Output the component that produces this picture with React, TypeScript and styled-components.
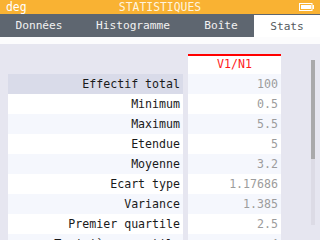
import React from "react";
import styled, { createGlobalStyle } from "styled-components";

const Global = createGlobalStyle`
  html, body { margin: 0; padding: 0; }
  body { width: 320px; height: 240px; overflow: hidden; background: #e6e6f0; }
  * { box-sizing: border-box; }
`;

const Screen = styled.div`
  width: 320px;
  height: 240px;
  display: flex;
  flex-direction: column;
  overflow: hidden;
  font-family: "DejaVu Sans Mono", "Liberation Mono", monospace;
  background: #e6e6f0;
`;

const TitleBar = styled.div`
  flex-shrink: 0;
  height: 14px;
  background: #f9b233;
  color: #ffffff;
  display: flex;
  align-items: center;
  position: relative;
  font-size: 11.4px;
  line-height: 14px;
  padding: 0 6px;
`;

const Mode = styled.span`
  flex: 1;
`;

const Title = styled.span`
  position: absolute;
  left: 0;
  right: 0;
  text-align: center;
  color: #fff4df;
`;

const TabBar = styled.div`
  flex-shrink: 0;
  height: 23px;
  background: #5e6670;
  display: flex;
`;

const Tab = styled.div<{ $w: number; $active?: boolean }>`
  width: ${(p) => p.$w}px;
  margin-top: ${(p) => (p.$active ? 1 : 0)}px;
  background: ${(p) => (p.$active ? "#ffffff" : "transparent")};
  color: ${(p) => (p.$active ? "#555a60" : "#f2f2f2")};
  display: flex;
  align-items: center;
  justify-content: center;
  font-size: 11.2px;
`;

const Strip = styled.div`
  flex-shrink: 0;
  height: 7px;
  background: #fcfcfd;
`;

const Content = styled.div`
  flex: 1;
  min-height: 0;
  display: flex;
  padding: 10px 0 0 8px;
`;

const Table = styled.div`
  width: 273px;
  display: grid;
  grid-template-columns: 175px 93px;
  column-gap: 5px;
  grid-auto-rows: 20px;
  align-content: start;
  font-size: 11.6px;
`;

const Blank = styled.div``;

const HeadCell = styled.div`
  border-top: 2px solid #ff0000;
  background: #ffffff;
  color: #ff1a1a;
  text-align: center;
  line-height: 16px;
`;

const Label = styled.div<{ $bg: string }>`
  background: ${(p) => p.$bg};
  color: #1a1a1a;
  text-align: right;
  padding-right: 3px;
  line-height: 20px;
  white-space: nowrap;
`;

const Value = styled.div<{ $bg: string }>`
  background: ${(p) => p.$bg};
  color: #9c9c9c;
  text-align: right;
  padding-right: 3px;
  line-height: 20px;
  white-space: nowrap;
`;

const Track = styled.div`
  flex-shrink: 0;
  margin-left: 30px;
  margin-top: 6px;
  width: 4px;
  height: 165px;
  background: #dcdbe5;
  display: flex;
  flex-direction: column;
`;

const Thumb = styled.div`
  height: 99px;
  background: #a9a9ab;
`;

const Battery = () => (
  <svg width="15" height="8" viewBox="0 0 15 8">
    <rect x="0.5" y="0.5" width="12.5" height="7" fill="none" stroke="#fff" />
    <rect x="2" y="2" width="10" height="4" fill="#fff" />
    <rect x="13.5" y="2" width="1.5" height="4" fill="#fff" />
  </svg>
);

const rows: [string, string][] = [
  ["Effectif total", "100"],
  ["Minimum", "0.5"],
  ["Maximum", "5.5"],
  ["Etendue", "5"],
  ["Moyenne", "3.2"],
  ["Ecart type", "1.17686"],
  ["Variance", "1.385"],
  ["Premier quartile", "2.5"],
  ["Troisième quartile", "4"],
];

export default function App() {
  return (
    <>
      <Global />
      <Screen>
        <TitleBar>
          <Mode>deg</Mode>
          <Title>STATISTIQUES</Title>
          <Battery />
        </TitleBar>
        <TabBar>
          <Tab $w={78}>Données</Tab>
          <Tab $w={110}>Histogramme</Tab>
          <Tab $w={66}>Boîte</Tab>
          <Tab $w={66} $active>Stats</Tab>
        </TabBar>
        <Strip />
        <Content>
          <Table>
            <Blank />
            <HeadCell>V1/N1</HeadCell>
            {rows.map(([l, v], i) => {
              const bg = i % 2 === 0 ? "#f5f7fd" : "#ffffff";
              return (
                <React.Fragment key={l}>
                  <Label $bg={i === 0 ? "#d9dbe9" : bg}>{l}</Label>
                  <Value $bg={bg}>{v}</Value>
                </React.Fragment>
              );
            })}
          </Table>
          <Track>
            <Thumb />
          </Track>
        </Content>
      </Screen>
    </>
  );
}
